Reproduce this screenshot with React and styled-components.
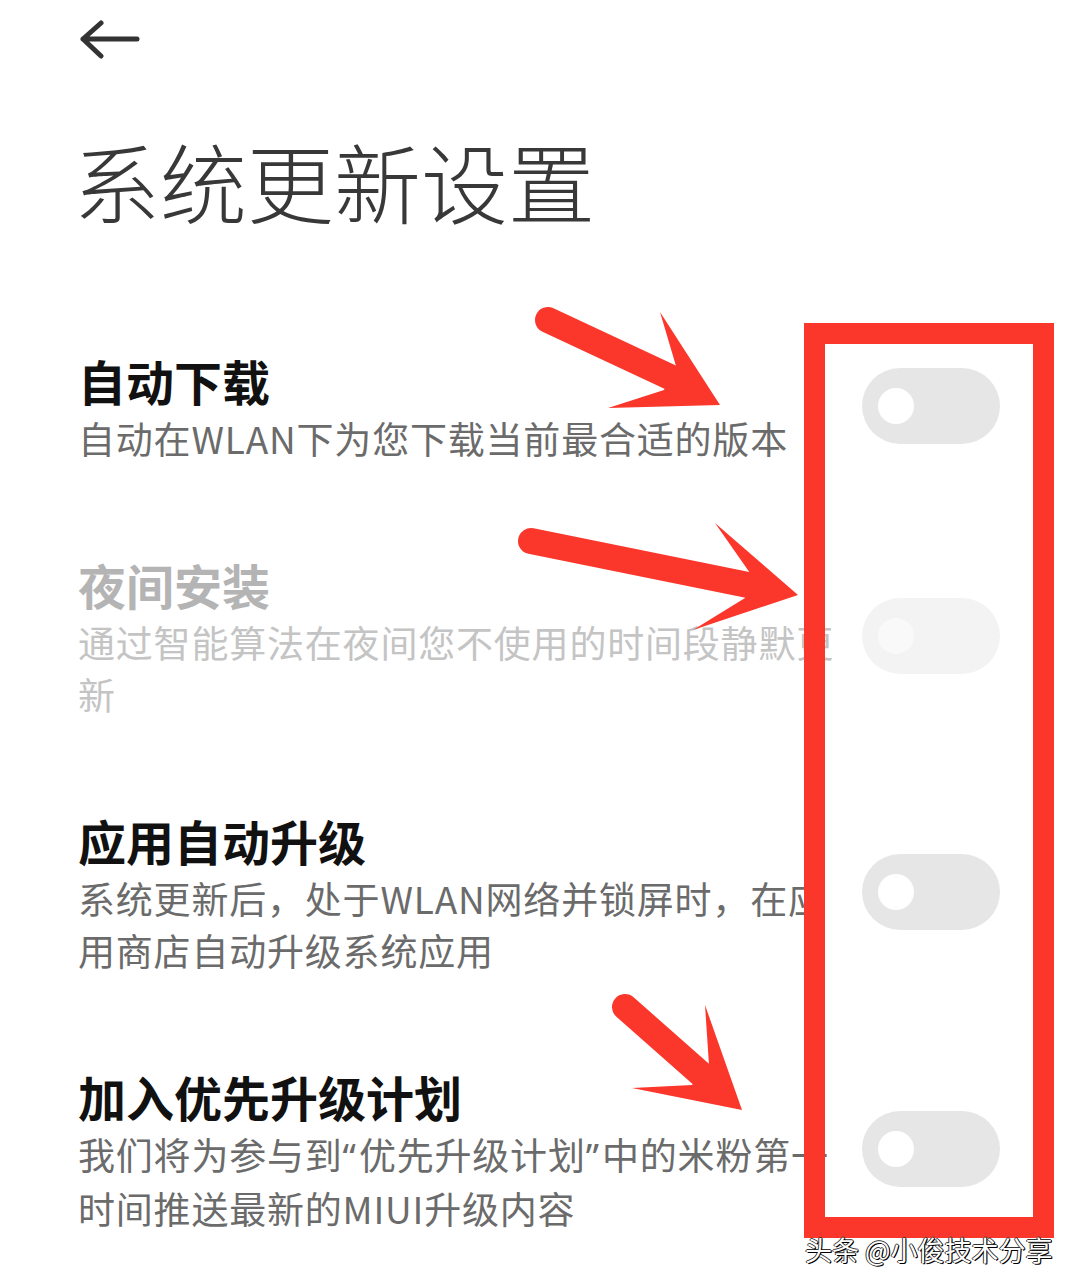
import React from 'react';
import styled, { createGlobalStyle } from 'styled-components';

const GlobalStyle = createGlobalStyle`
    body {
        margin: 0;
        background: #fff;
        font-family: "Noto Sans CJK SC", "Noto Sans", sans-serif;
    }
`;

const Screen = styled.div`
    position: relative;
    width: 1080px;
    height: 1288px;
    overflow: hidden;
    background: #fff;
`;

const TopBar = styled.div`
    height: 80px;
    padding-left: 80px;
    display: flex;
    align-items: center;
`;

const Content = styled.div`
    padding: 0 80px 0 78px;
`;

const PageTitle = styled.h1`
    margin: 50px 0 0 -5px;
    font-size: 87px;
    line-height: 100px;
    font-weight: 300;
    color: #383838;
`;

const SettingsList = styled.div`
    margin-top: 118px;
    display: flex;
    flex-direction: column;
    gap: 88px;
`;

const Row = styled.div`
    display: flex;
    align-items: center;
    justify-content: space-between;
`;

const TextCol = styled.div`
    flex: 1;
    min-width: 0;
`;

const RowTitle = styled.div`
    font-size: 48px;
    line-height: 64px;
    font-weight: 700;
    color: ${p => (p.$disabled ? '#b4b4b4' : '#111')};
`;

const RowDesc = styled.div`
    font-size: 37px;
    line-height: 52px;
    letter-spacing: 0.8px;
    color: ${p => (p.$disabled ? '#c4c4c4' : '#6b6b6b')};
`;

const Line = styled.span`
    display: block;
    white-space: nowrap;
`;

// proportional quote marks instead of the full-width CJK ones
const Quote = styled.span`
    font-family: "Noto Sans", sans-serif;
    letter-spacing: 3px;
`;

const Track = styled.div`
    flex-shrink: 0;
    width: 138px;
    height: 76px;
    border-radius: 38px;
    padding-left: 16px;
    box-sizing: border-box;
    display: flex;
    align-items: center;
    background: ${p => (p.$disabled ? '#f3f3f3' : '#e6e6e6')};
`;

const Knob = styled.div`
    width: 36px;
    height: 36px;
    border-radius: 50%;
    background: ${p => (p.$disabled ? '#f9f9f9' : '#fff')};
`;

// red annotation frame drawn over the switches
const Frame = styled.div`
    position: absolute;
    left: 804px;
    top: 323px;
    width: 250px;
    height: 915px;
    box-sizing: border-box;
    border: 21px solid #fb372c;
`;

const Marks = styled.svg`
    position: absolute;
    left: 0;
    top: 0;
    pointer-events: none;
`;

const Watermark = styled.div`
    position: absolute;
    left: 805px;
    top: 1230px;
    font-size: 27px;
    line-height: 40px;
    color: #fff;
    white-space: nowrap;
    text-shadow: 1px 1px 0 #000, -1px 0 0 #333, 0 -1px 0 #333, 1px 0 0 #000;
`;

const BackIcon = () => (
    <svg width="60" height="40" viewBox="0 0 60 40">
        <path d="M3 19 H57 M3 19 L21 3 M3 19 L21 36" stroke="#333" strokeWidth="5" strokeLinecap="round" strokeLinejoin="round" fill="none" />
    </svg>
);

const arrows = [
    { tail: [548, 320], shaftEnd: [672, 378], head: '720,405 660,312 676,366 664,390 608,408' },
    { tail: [531, 541], shaftEnd: [748, 585], head: '798,595 715,523 750,573 745,598 693,630' },
    { tail: [625, 1007], shaftEnd: [702, 1075], head: '742,1110 705,1005 709,1065 692,1085 632,1088' },
];

const Arrows = () => (
    <Marks width="1080" height="1288" viewBox="0 0 1080 1288">
        {arrows.map((a, i) => (
            <g key={i} fill="#fb372c" stroke="none">
                <line x1={a.tail[0]} y1={a.tail[1]} x2={a.shaftEnd[0]} y2={a.shaftEnd[1]} stroke="#fb372c" strokeWidth="26" strokeLinecap="round" />
                <polygon points={a.head} />
            </g>
        ))}
    </Marks>
);

const settings = [
    { title: '自动下载', desc: ['自动在WLAN下为您下载当前最合适的版本'] },
    { title: '夜间安装', desc: ['通过智能算法在夜间您不使用的时间段静默更', '新'], disabled: true },
    { title: '应用自动升级', desc: ['系统更新后，处于WLAN网络并锁屏时，在应', '用商店自动升级系统应用'] },
    {
        title: '加入优先升级计划',
        desc: [
            <>我们将为参与到<Quote>“</Quote>优先升级计划<Quote>”</Quote>中的米粉第一</>,
            '时间推送最新的MIUI升级内容',
        ],
    },
];

const App = () => (
    <Screen>
        <GlobalStyle />
        <TopBar>
            <BackIcon />
        </TopBar>
        <Content>
            <PageTitle>系统更新设置</PageTitle>
            <SettingsList>
                {settings.map(s => (
                    <Row key={s.title}>
                        <TextCol>
                            <RowTitle $disabled={s.disabled}>{s.title}</RowTitle>
                            <RowDesc $disabled={s.disabled}>
                                {s.desc.map((l, i) => <Line key={i}>{l}</Line>)}
                            </RowDesc>
                        </TextCol>
                        <Track $disabled={s.disabled}>
                            <Knob $disabled={s.disabled} />
                        </Track>
                    </Row>
                ))}
            </SettingsList>
        </Content>
        <Frame />
        <Arrows />
        <Watermark>头条 @小俊技术分享</Watermark>
    </Screen>
);

export default App;
